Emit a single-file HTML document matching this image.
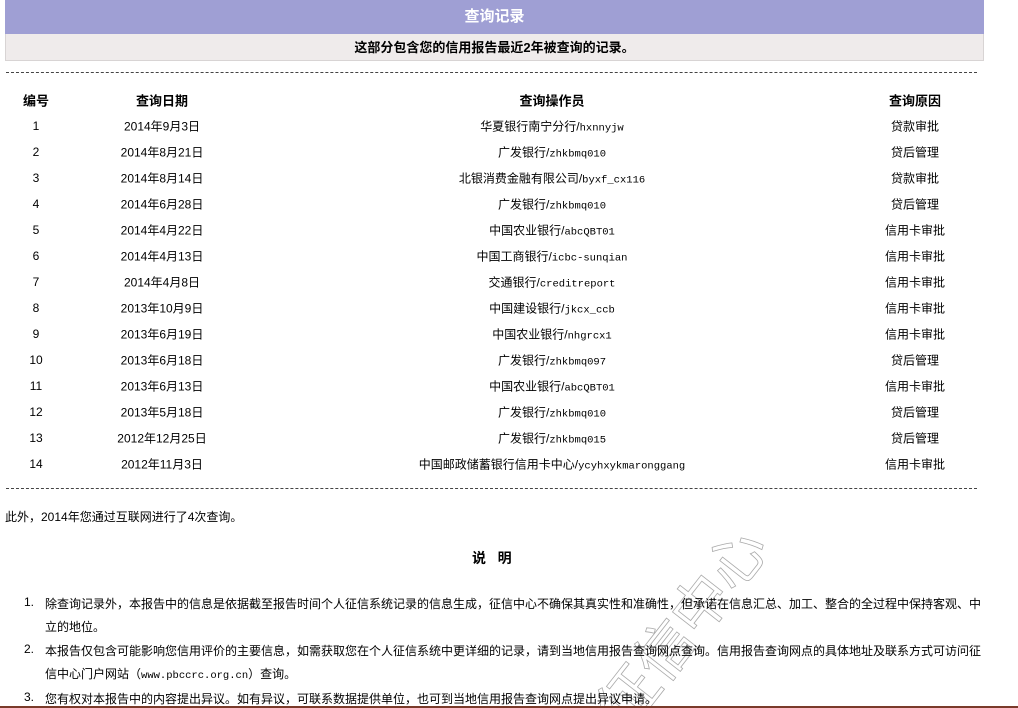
<!DOCTYPE html>
<html><head><meta charset="utf-8"><style>
html{overflow:hidden;width:1018px;height:708px}
body{margin:0;width:1018px;height:708px;overflow:hidden;background:#fff;position:relative;font-family:"Liberation Sans","Noto Sans CJK SC",sans-serif;font-size:12px;color:#000}
.a{position:absolute;white-space:nowrap}
.hd{left:5px;top:0;width:979px;height:34px;background:#9f9fd4;color:#fff;font-size:15px;font-weight:bold;text-align:center;line-height:34px}
.sub{left:5px;top:34px;width:977px;height:26px;background:#efebeb;border:1px solid #d8d4d4;border-top:none;font-weight:bold;font-size:13px;text-align:center;line-height:28px}
.dash{left:6px;width:971px;border-top:1px dashed #444}
.c1,.c2,.c3,.c4{position:absolute;text-align:center;transform:translateY(-50%)}
.c1{left:0;width:72px}.c2{left:82px;width:160px}.c3{left:300px;width:504px}.c4{left:855px;width:120px}
.m{font-family:"Liberation Mono","Noto Sans CJK SC",monospace;font-size:10.5px}
.th{font-weight:bold;font-size:13px}
.wm{position:absolute;color:transparent;-webkit-text-stroke:0.8px #aaa;font-size:58px;font-family:"Noto Sans CJK SC",sans-serif;transform:rotate(-52deg);transform-origin:left top}
</style></head><body>
<div class="wm a" style="left:575px;top:690px;">征信中心</div>
<div class="wm a" style="left:690px;top:745px;">用</div>
<div class="a hd">查询记录</div>
<div class="a sub">这部分包含您的信用报告最近2年被查询的记录。</div>
<div class="a dash" style="top:72px"></div>
<div style="position:absolute;left:0;top:100px;width:1018px" class="th"><div class="c1">编号</div><div class="c2">查询日期</div><div class="c3">查询操作员</div><div class="c4">查询原因</div></div>
<div style="position:absolute;left:0;top:126px;width:1018px"><div class="c1">1</div><div class="c2">2014年9月3日</div><div class="c3">华夏银行南宁分行/<span class="m">hxnnyjw</span></div><div class="c4">贷款审批</div></div>
<div style="position:absolute;left:0;top:152px;width:1018px"><div class="c1">2</div><div class="c2">2014年8月21日</div><div class="c3">广发银行/<span class="m">zhkbmq010</span></div><div class="c4">贷后管理</div></div>
<div style="position:absolute;left:0;top:178px;width:1018px"><div class="c1">3</div><div class="c2">2014年8月14日</div><div class="c3">北银消费金融有限公司/<span class="m">byxf_cx116</span></div><div class="c4">贷款审批</div></div>
<div style="position:absolute;left:0;top:204px;width:1018px"><div class="c1">4</div><div class="c2">2014年6月28日</div><div class="c3">广发银行/<span class="m">zhkbmq010</span></div><div class="c4">贷后管理</div></div>
<div style="position:absolute;left:0;top:230px;width:1018px"><div class="c1">5</div><div class="c2">2014年4月22日</div><div class="c3">中国农业银行/<span class="m">abcQBT01</span></div><div class="c4">信用卡审批</div></div>
<div style="position:absolute;left:0;top:256px;width:1018px"><div class="c1">6</div><div class="c2">2014年4月13日</div><div class="c3">中国工商银行/<span class="m">icbc-sunqian</span></div><div class="c4">信用卡审批</div></div>
<div style="position:absolute;left:0;top:282px;width:1018px"><div class="c1">7</div><div class="c2">2014年4月8日</div><div class="c3">交通银行/<span class="m">creditreport</span></div><div class="c4">信用卡审批</div></div>
<div style="position:absolute;left:0;top:308px;width:1018px"><div class="c1">8</div><div class="c2">2013年10月9日</div><div class="c3">中国建设银行/<span class="m">jkcx_ccb</span></div><div class="c4">信用卡审批</div></div>
<div style="position:absolute;left:0;top:334px;width:1018px"><div class="c1">9</div><div class="c2">2013年6月19日</div><div class="c3">中国农业银行/<span class="m">nhgrcx1</span></div><div class="c4">信用卡审批</div></div>
<div style="position:absolute;left:0;top:360px;width:1018px"><div class="c1">10</div><div class="c2">2013年6月18日</div><div class="c3">广发银行/<span class="m">zhkbmq097</span></div><div class="c4">贷后管理</div></div>
<div style="position:absolute;left:0;top:386px;width:1018px"><div class="c1">11</div><div class="c2">2013年6月13日</div><div class="c3">中国农业银行/<span class="m">abcQBT01</span></div><div class="c4">信用卡审批</div></div>
<div style="position:absolute;left:0;top:412px;width:1018px"><div class="c1">12</div><div class="c2">2013年5月18日</div><div class="c3">广发银行/<span class="m">zhkbmq010</span></div><div class="c4">贷后管理</div></div>
<div style="position:absolute;left:0;top:438px;width:1018px"><div class="c1">13</div><div class="c2">2012年12月25日</div><div class="c3">广发银行/<span class="m">zhkbmq015</span></div><div class="c4">贷后管理</div></div>
<div style="position:absolute;left:0;top:464px;width:1018px"><div class="c1">14</div><div class="c2">2012年11月3日</div><div class="c3">中国邮政储蓄银行信用卡中心/<span class="m">ycyhxykmaronggang</span></div><div class="c4">信用卡审批</div></div>
<div class="a dash" style="top:488px"></div>
<div class="a" style="left:5px;top:508px">此外，2014年您通过互联网进行了4次查询。</div>
<div class="a" style="left:472px;top:548px;font-weight:bold;font-size:14px">说&nbsp;&nbsp;&nbsp;明</div>
<div class="a" style="left:24px;top:595px">1.</div>
<div class="a" style="left:45px;top:595px">除查询记录外，本报告中的信息是依据截至报告时间个人征信系统记录的信息生成，征信中心不确保其真实性和准确性，但承诺在信息汇总、加工、整合的全过程中保持客观、中</div>
<div class="a" style="left:45px;top:618px">立的地位。</div>
<div class="a" style="left:24px;top:642px">2.</div>
<div class="a" style="left:45px;top:642px">本报告仅包含可能影响您信用评价的主要信息，如需获取您在个人征信系统中更详细的记录，请到当地信用报告查询网点查询。信用报告查询网点的具体地址及联系方式可访问征</div>
<div class="a" style="left:45px;top:665px">信中心门户网站（<span class="m">www.pbccrc.org.cn</span>）查询。</div>
<div class="a" style="left:24px;top:690px">3.</div>
<div class="a" style="left:45px;top:690px">您有权对本报告中的内容提出异议。如有异议，可联系数据提供单位，也可到当地信用报告查询网点提出异议申请。</div>
<div class="a" style="left:0;top:706px;width:1018px;height:2px;background:#7a3a2a"></div>
</body></html>
